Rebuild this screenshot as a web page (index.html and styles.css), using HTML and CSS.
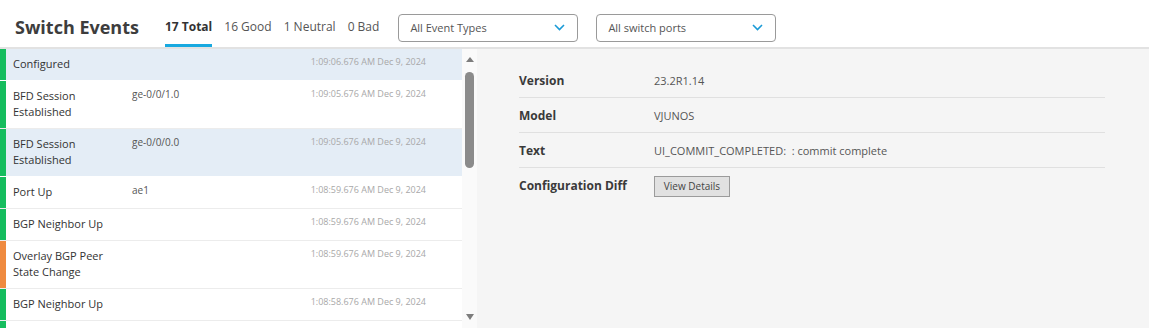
FILE: index.html
```html
<!DOCTYPE html>
<html>
<head>
    <title>Switch Events</title>
    <link rel="stylesheet" href="styles.css">
</head>
<body>
    <div class="header">
        <h1 class="title">Switch Events</h1>
        <div class="tabs">
            <span class="tab active">17 Total</span>
            <span class="tab">16 Good</span>
            <span class="tab">1 Neutral</span>
            <span class="tab">0 Bad</span>
        </div>
        <div class="select">
            <span>All Event Types</span>
            <svg width="11" height="7" viewBox="0 0 11 7"><polyline points="1,1 5.5,5.5 10,1" fill="none" stroke="#1a9ad6" stroke-width="1.6"/></svg>
        </div>
        <div class="select">
            <span>All switch ports</span>
            <svg width="11" height="7" viewBox="0 0 11 7"><polyline points="1,1 5.5,5.5 10,1" fill="none" stroke="#1a9ad6" stroke-width="1.6"/></svg>
        </div>
    </div>

    <div class="main">
        <div class="list-pane">
            <div class="list">
                <div class="row selected">
                    <span class="bar good"></span>
                    <div class="cells">
                        <span class="name">Configured</span>
                        <span class="port"></span>
                        <span class="time">1:09:06.676 AM Dec 9, 2024</span>
                    </div>
                </div>
                <div class="row">
                    <span class="bar good"></span>
                    <div class="cells">
                        <span class="name">BFD Session Established</span>
                        <span class="port">ge-0/0/1.0</span>
                        <span class="time">1:09:05.676 AM Dec 9, 2024</span>
                    </div>
                </div>
                <div class="row selected">
                    <span class="bar good"></span>
                    <div class="cells">
                        <span class="name">BFD Session Established</span>
                        <span class="port">ge-0/0/0.0</span>
                        <span class="time">1:09:05.676 AM Dec 9, 2024</span>
                    </div>
                </div>
                <div class="row">
                    <span class="bar good"></span>
                    <div class="cells">
                        <span class="name">Port Up</span>
                        <span class="port">ae1</span>
                        <span class="time">1:08:59.676 AM Dec 9, 2024</span>
                    </div>
                </div>
                <div class="row">
                    <span class="bar good"></span>
                    <div class="cells">
                        <span class="name">BGP Neighbor Up</span>
                        <span class="port"></span>
                        <span class="time">1:08:59.676 AM Dec 9, 2024</span>
                    </div>
                </div>
                <div class="row">
                    <span class="bar neutral"></span>
                    <div class="cells">
                        <span class="name">Overlay BGP Peer State Change</span>
                        <span class="port"></span>
                        <span class="time">1:08:59.676 AM Dec 9, 2024</span>
                    </div>
                </div>
                <div class="row">
                    <span class="bar good"></span>
                    <div class="cells">
                        <span class="name">BGP Neighbor Up</span>
                        <span class="port"></span>
                        <span class="time">1:08:58.676 AM Dec 9, 2024</span>
                    </div>
                </div>
                <!-- next row, only its top edge is in view -->
                <div class="row">
                    <span class="bar good"></span>
                    <div class="cells">
                        <span class="name">&nbsp;</span>
                    </div>
                </div>
            </div>
            <div class="scrollbar">
                <span class="arrow-up"></span>
                <span class="thumb"></span>
                <span class="spacer"></span>
                <span class="arrow-down"></span>
            </div>
        </div>

        <div class="detail">
            <div class="detail-row">
                <span class="label">Version</span>
                <span class="value">23.2R1.14</span>
            </div>
            <div class="detail-row">
                <span class="label">Model</span>
                <span class="value">VJUNOS</span>
            </div>
            <div class="detail-row">
                <span class="label">Text</span>
                <span class="value">UI_COMMIT_COMPLETED:&nbsp; : commit complete</span>
            </div>
            <div class="detail-row">
                <span class="label">Configuration Diff</span>
                <span class="value"><button class="button">View Details</button></span>
            </div>
        </div>
    </div>
</body>
</html>
```

FILE: styles.css
```css
body {
    margin: 0;
    font-family: "Open Sans", "Noto Sans", sans-serif;
    color: #333;
    background: #fff;
    overflow: hidden;
}

.header {
    display: flex;
    align-items: stretch;
    height: 39px;
    padding-top: 8px;
    border-bottom: 2px solid #e2e2e2;
}

.title {
    margin: 0 26px 0 15px;
    font-size: 18px;
    font-weight: 700;
    color: #3d3d3d;
    display: flex;
    align-items: center;
    padding-bottom: 1px;
}

.tabs {
    display: flex;
    gap: 12px;
    margin-right: 19px;
}

.tab {
    display: flex;
    align-items: center;
    font-size: 12px;
    color: #555;
    border-bottom: 3px solid transparent;
    padding-top: 1px;
}

.tab.active {
    font-weight: 700;
    color: #333;
    border-bottom-color: #18a9e0;
}

.select {
    align-self: center;
    height: 26px;
    margin-right: 18px;
    border: 1px solid #9a9a9a;
    border-radius: 4px;
    display: flex;
    align-items: center;
    justify-content: space-between;
    padding: 0 12px 0 11px;
    width: 155px;
    font-size: 11px;
    color: #555;
}

.main {
    display: flex;
    height: 279px;
}

.list-pane {
    display: flex;
    width: 477px;
}

.list {
    width: 462px;
    overflow: hidden;
}

.row {
    display: flex;
    border-bottom: 1px solid #ececec;
    background: #fff;
}

.row.selected {
    background: #e4edf6;
    border-bottom-color: #fff;
}

.bar {
    width: 6px;
    flex-shrink: 0;
}

.good { background: #15bd5e; }
.neutral { background: #ef8a3f; }

.cells {
    flex: 1;
    display: grid;
    grid-template-columns: 119px 1fr auto;
    padding: 7px 36px 8px 7px;
}

.name {
    font-size: 11px;
    line-height: 16px;
    color: #333;
    padding-right: 10px;
}

.port {
    font-size: 10px;
    line-height: 13px;
    color: #555;
}

.time {
    font-size: 9px;
    line-height: 12px;
    color: #a8a8a8;
}

.scrollbar {
    width: 15px;
    background: #fafafa;
    display: flex;
    flex-direction: column;
    align-items: center;
    padding: 8px 0 8px;
    box-sizing: border-box;
}

.arrow-up {
    width: 0;
    height: 0;
    border-left: 4px solid transparent;
    border-right: 4px solid transparent;
    border-bottom: 5px solid #7d7d7d;
}

.thumb {
    margin-top: 10px;
    width: 9px;
    height: 96px;
    background: #8b8b8b;
    border-radius: 5px;
}

.spacer { flex: 1; }

.arrow-down {
    width: 0;
    height: 0;
    border-left: 4px solid transparent;
    border-right: 4px solid transparent;
    border-top: 6px solid #7d7d7d;
}

.detail {
    flex: 1;
    background: #f5f5f5;
    padding: 14px 44px 0 42px;
}

.detail-row {
    display: grid;
    grid-template-columns: 135px 1fr;
    align-items: center;
    height: 34px;
    border-bottom: 1px solid #e0e0e0;
    font-size: 11px;
}

.detail-row:last-child {
    border-bottom: none;
}

.label {
    font-size: 12px;
    font-weight: 700;
    color: #3a3a3a;
}

.value {
    color: #555;
}

.button {
    font-family: "Open Sans", "Noto Sans", sans-serif;
    font-size: 10px;
    color: #444;
    background: #e1e1e1;
    border: 1px solid #9b9b9b;
    height: 21px;
    width: 76px;
    padding: 0;
    margin-top: 2px;
}
```
